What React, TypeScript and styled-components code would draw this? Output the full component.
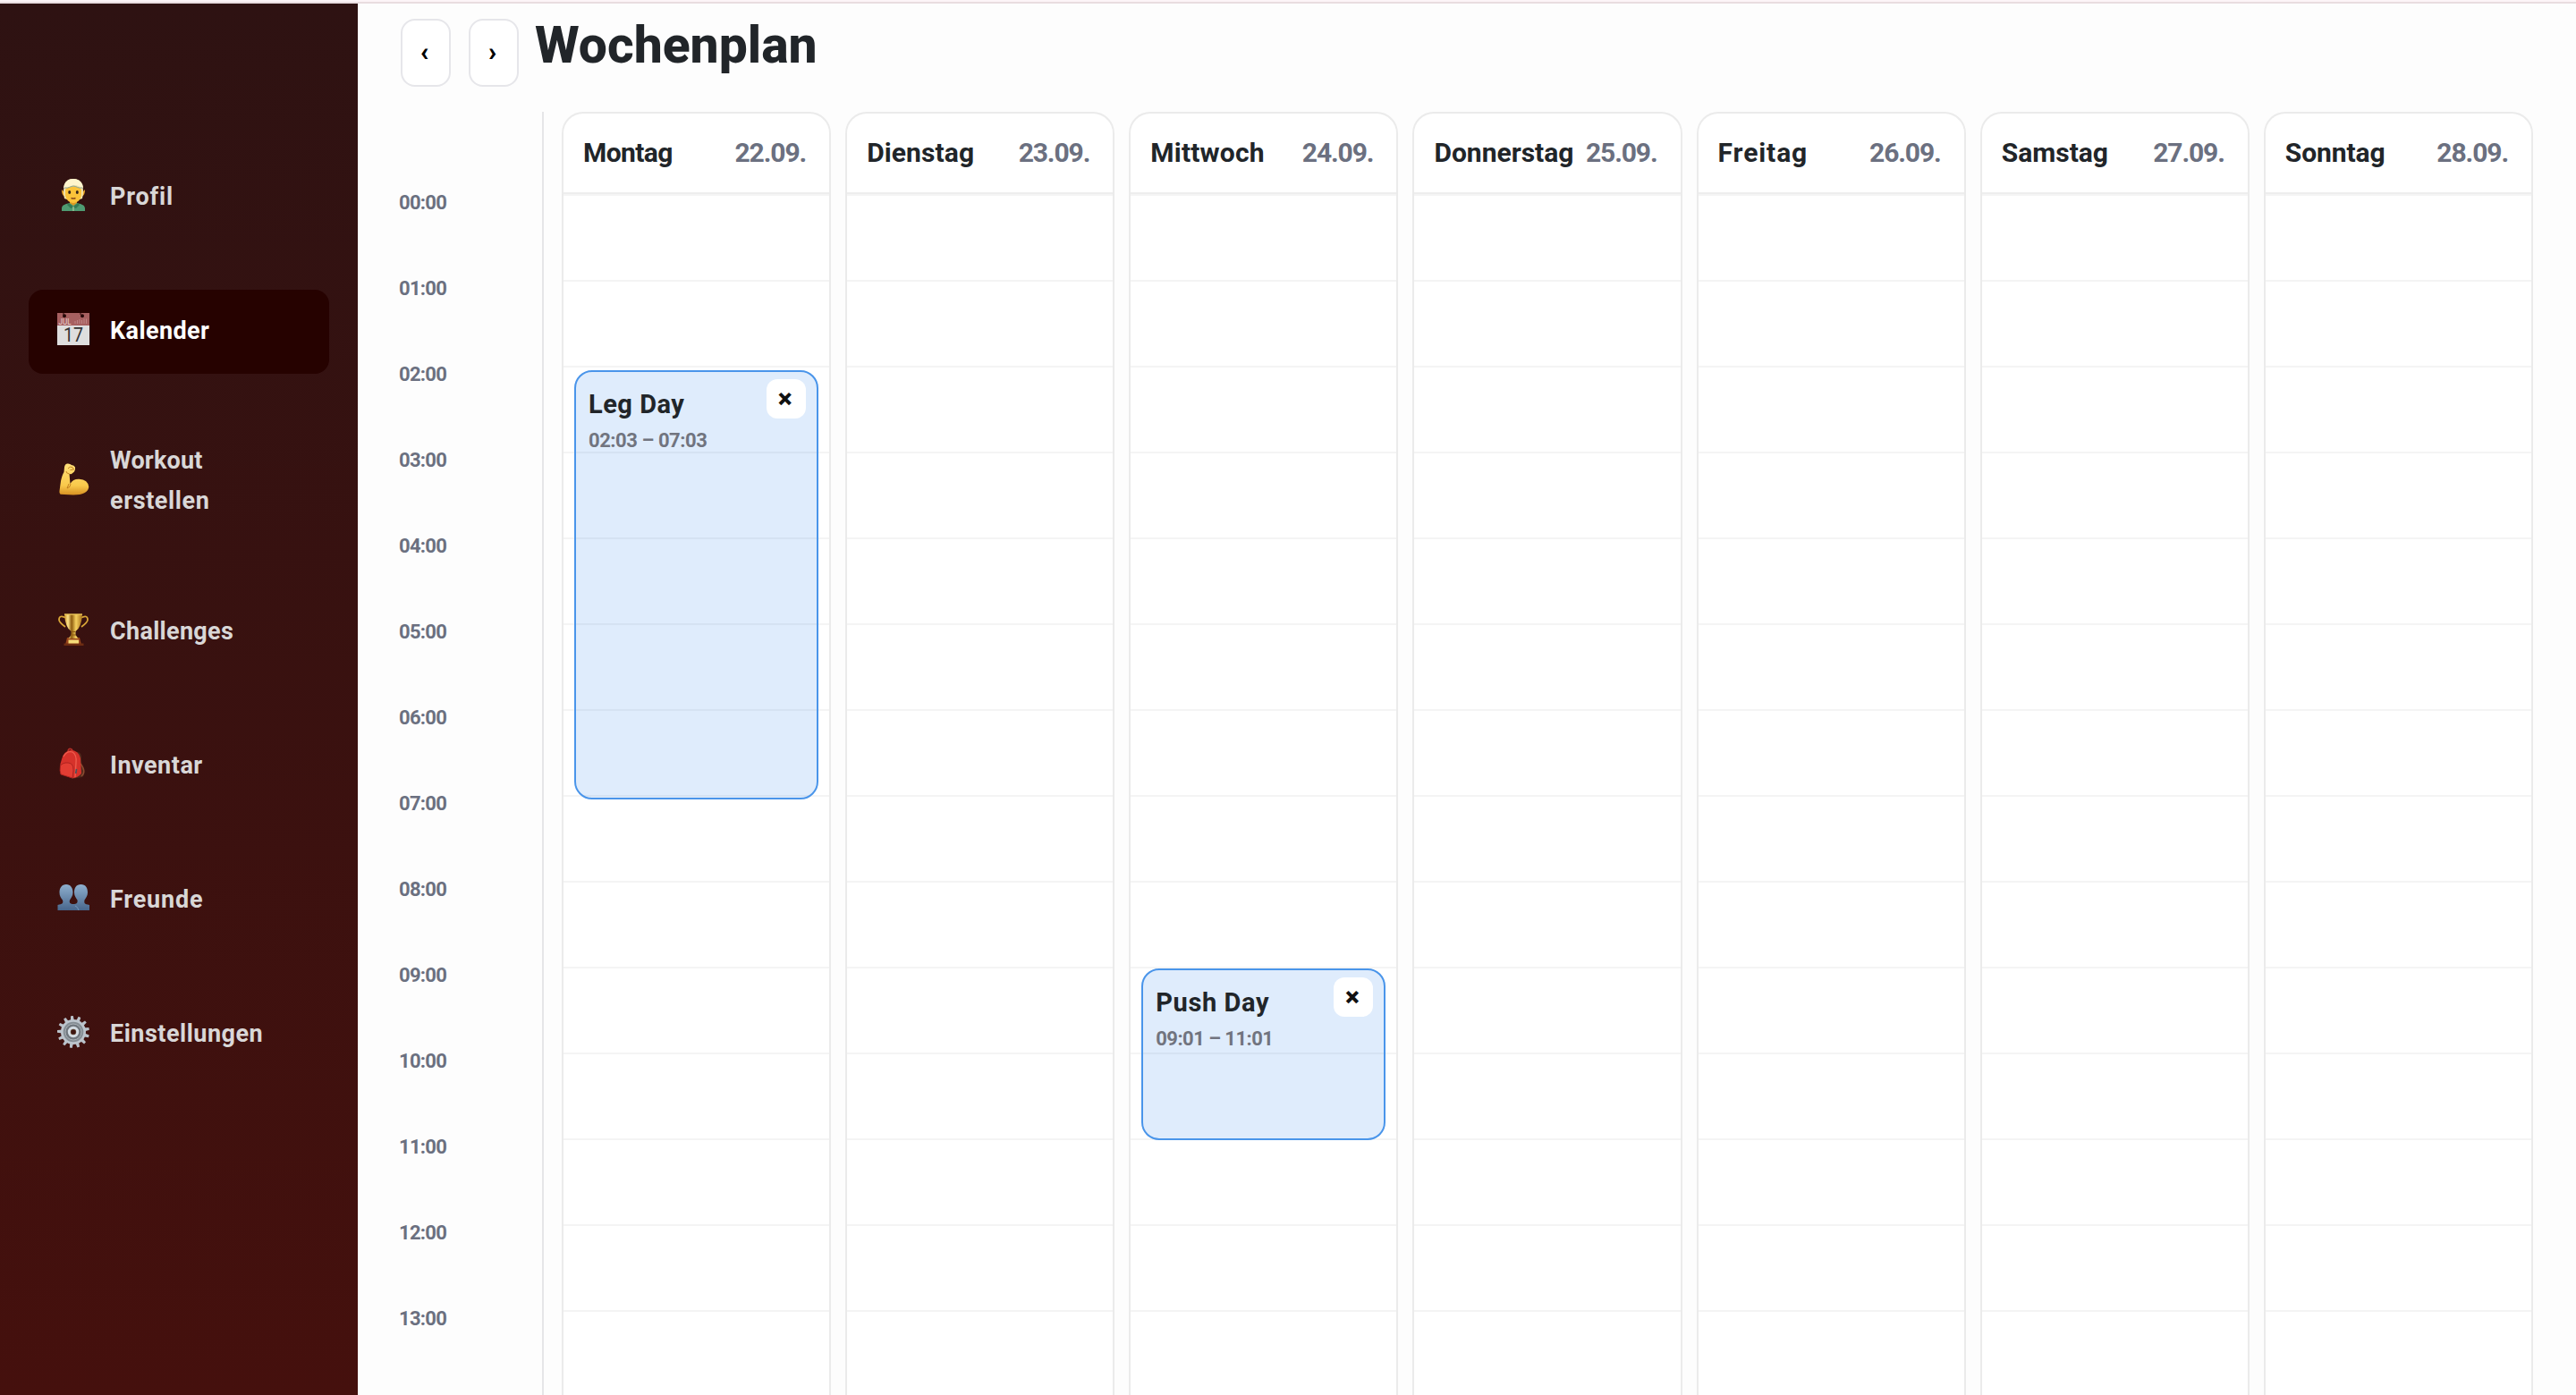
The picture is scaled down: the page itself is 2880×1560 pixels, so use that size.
import React from "react";
import styled, { createGlobalStyle } from "styled-components";

const GlobalStyle = createGlobalStyle`
  *, *::before, *::after { box-sizing: border-box; }
  body { margin: 0; background: #fdfdfd; overflow: hidden; font-family: Roboto, "Liberation Sans", sans-serif; }
  button { font-family: inherit; padding: 0; cursor: pointer; }
`;

const Page = styled.div`
  display: flex;
  flex-direction: column;
  width: 2880px;
  height: 1560px;
  overflow: hidden;
`;

const TopStrip = styled.div`
  flex: none;
  height: 4px;
  background: #fdf4f7;
  border-bottom: 2px solid #e9dde0;
`;

const Body = styled.div`
  display: flex;
  flex: 1;
  min-height: 0;
`;

const Sidebar = styled.nav`
  flex: none;
  display: flex;
  flex-direction: column;
  gap: 56px;
  width: 400px;
  padding: 170px 32px 0;
  background: linear-gradient(180deg, #2e1212 0%, #45100d 100%);
`;

const NavItem = styled.a<{ $active?: boolean }>`
  display: flex;
  align-items: center;
  gap: 23px;
  min-height: 94px;
  padding: 20px 32px;
  border-radius: 16px;
  background: ${(p) => (p.$active ? "#260200" : "transparent")};
  color: ${(p) => (p.$active ? "#ffffff" : "#d9d7d7")};
`;

const NavIcon = styled.svg`
  flex: none;
  width: 36px;
  height: 36px;
  margin-bottom: 6px;
`;

const NavLabel = styled.span`
  display: flex;
  flex-direction: column;
  margin: -1px 0 1px;
  font-size: 27px;
  font-weight: 700;
  line-height: 45px;
`;

const Line = styled.span<{ $spacing: number }>`
  letter-spacing: ${(p) => p.$spacing}px;
  white-space: nowrap;
`;

const Main = styled.main`
  flex: 1;
  display: flex;
  flex-direction: column;
  gap: 28px;
  padding: 17px 48px 0 46px;
  min-width: 0;
  background: #fdfdfd;
`;

const Toolbar = styled.header`
  flex: none;
  display: flex;
  align-items: flex-start;
  height: 76px;
  gap: 20px;
  padding-left: 2px;
`;

const ArrowButton = styled.button`
  width: 56px;
  height: 76px;
  padding: 0 3px 4px 0;
  border: 2px solid #e6e6ea;
  border-radius: 16px;
  background: #fff;
  color: #000;
  font-size: 30px;
  font-weight: 900;
`;

const Title = styled.h1`
  margin: 0 0 0 -2px;
  color: #212529;
  font-size: 57px;
  font-weight: 800;
  line-height: 59px;
`;

const Planner = styled.section`
  flex: 1;
  display: flex;
  gap: 20px;
  min-height: 0;
`;

const TimeColumn = styled.div`
  flex: none;
  width: 162px;
  padding-top: 92px;
  border-right: 2px solid #e6e6e8;
`;

const HourLabel = styled.div`
  height: 96px;
  color: #6b7080;
  font-size: 22px;
  font-weight: 700;
  line-height: 19px;
  letter-spacing: -0.7px;
`;

const Days = styled.div`
  flex: 1;
  display: grid;
  grid-template-columns: repeat(7, 1fr);
  gap: 16px;
`;

const DayColumn = styled.article`
  border: 2px solid #ebebeb;
  border-bottom: 0;
  border-radius: 24px 24px 0 0;
  background: #fff;
  overflow: hidden;
`;

const DayHeader = styled.header`
  display: flex;
  justify-content: space-between;
  align-items: center;
  height: 90px;
  padding: 0 26px 1px 22px;
  border-bottom: 2px solid #eeeeee;
  font-size: 30px;
`;

const DayName = styled.strong<{ $spacing: number }>`
  color: #212529;
  font-weight: 700;
  letter-spacing: ${(p) => p.$spacing}px;
`;

const DayDate = styled.span`
  color: #6b7080;
  font-weight: 700;
  letter-spacing: -1.1px;
`;

const DayGrid = styled.div`
  position: relative;
`;

const HourSlot = styled.div`
  height: 96px;
  border-top: 2px solid #f4f4f4;
`;

const EventCard = styled.div<{ $start: number; $hours: number }>`
  position: absolute;
  top: ${(p) => Math.round(p.$start * 96)}px;
  left: 12px;
  right: 12px;
  height: ${(p) => p.$hours * 96}px;
  display: flex;
  justify-content: space-between;
  padding: 8px 12px 8px 14px;
  border: 2px solid #4a95ea;
  border-radius: 20px;
  background: rgba(32, 125, 232, 0.145);
`;

const EventText = styled.div`
  padding-top: 10px;
`;

const EventName = styled.div<{ $spacing: number }>`
  color: #212529;
  font-size: 29px;
  font-weight: 700;
  line-height: 36px;
  letter-spacing: ${(p) => p.$spacing}px;
`;

const EventTime = styled.div<{ $spacing: number }>`
  margin-top: 8px;
  color: #71747f;
  font-size: 22px;
  font-weight: 700;
  line-height: 30px;
  letter-spacing: ${(p) => p.$spacing}px;
`;

const RemoveButton = styled.button`
  width: 44px;
  height: 44px;
  padding: 0 3px 1px 0;
  border: 0;
  border-radius: 12px;
  background: #fff;
  color: #111;
  font-size: 30px;
  font-weight: 900;
  line-height: 40px;
`;

const ProfileIcon = () => (
  <NavIcon viewBox="0 0 36 36">
    <path d="M5 36v-3c0-4 5-5 9-6h8c4 1 9 2 9 6v3z" fill="#4f9b72" />
    <path d="M13 27l5 4 5-4 2 2-4 4-3-1-3 1-4-4z" fill="#347a55" />
    <path d="M18 31v5" stroke="#a9cf9a" strokeWidth="1.2" />
    <path d="M14 23h8v4l-4 3-4-3z" fill="#dc9b22" />
    <path d="M8 15L5 12c0 4 1 7 4 8zM28 15l3-3c0 4-1 7-4 8z" fill="#f2ae2e" />
    <path d="M8 22C5 8 9 0 18 0s13 8 10 22l-3 1-14 0z" fill="#f1e4b0" />
    <path d="M9 12c4-5 14-5 18 0v6c0 5-5 9-9 9s-9-4-9-9z" fill="#fbc33a" />
    <path d="M7 10C8 3 12 0 18 0s11 4 11 10c-4-1-6-3-9-3-4 0-7 3-13 3z" fill="#fff5cd" />
    <path d="M8 10c5 1 7-2 10-2s6 3 10 2" fill="none" stroke="#89a7a0" strokeWidth="1" />
    <ellipse cx="13.700" cy="15" rx="1.500" ry="2" fill="#35241a" />
    <ellipse cx="22.300" cy="15" rx="1.500" ry="2" fill="#35241a" />
    <path d="M15.500 21.500q2.500 1 5 0" fill="none" stroke="#8b4d1b" strokeWidth="1.400" />
  </NavIcon>
);

const CalendarIcon = () => (
  <NavIcon viewBox="0 0 36 36">
    <path d="M0 0h36v36H0z" fill="#dedede" />
    <path d="M0 0h36v14H0z" fill="#a76060" />
    <circle cx="8" cy="3.200" r="2" fill="#260808" />
    <circle cx="28" cy="3.200" r="2" fill="#260808" />
    <path d="M7 0v2M26 0v2" stroke="#260808" strokeWidth="1" />
    <text x="1.500" y="12.500" fontFamily="Roboto, sans-serif" fontSize="9" fill="#e9d5d5" textLength="14" lengthAdjust="spacingAndGlyphs">JUL</text>
    <path d="M20 9v3M22.500 8v4M25 7v5M27.500 8v4M30 6.500v5.500M32.500 6.500v5.500" stroke="#be8484" strokeWidth="1" />
    <text x="7" y="32" fontFamily="Roboto, sans-serif" fontSize="21.500" fill="#333" textLength="22" lengthAdjust="spacingAndGlyphs">17</text>
  </NavIcon>
);

const WorkoutIcon = () => (
  <NavIcon viewBox="0 0 36 36">
    <defs>
      <linearGradient id="arm" x1="0" y1="0" x2="0" y2="1">
        <stop offset="0" stopColor="#ffe07a" />
        <stop offset="0.700" stopColor="#f9c94b" />
        <stop offset="1" stopColor="#d68f22" />
      </linearGradient>
    </defs>
    <path d="M8 4.500Q8.500 1 11 .5q3-.5 5 1.500 3 .2 4 2.500.5 3-1 5L16 12q-1.500.4-2.500-.2L14.500 23q3-5.500 10-5.200 10 .8 10.800 8.700Q34 35.500 18 35.500L3.500 34.800Q2 34 2.500 31L4 20q1.500-7 3.500-10z" fill="url(#arm)" />
    <path d="M13.500 12q-4-1-3.500-3M12 6q2-3 5-1.500l1.500 2.500-4 .5M13 23l-2 5q4-1 4-5" fill="none" stroke="#bd7a1b" strokeWidth="0.900" />
  </NavIcon>
);

const TrophyIcon = () => (
  <NavIcon viewBox="0 0 36 36">
    <defs>
      <linearGradient id="cup">
        <stop offset="0" stopColor="#c98f27" />
        <stop offset="0.200" stopColor="#ffe58a" />
        <stop offset="0.400" stopColor="#8d5b0f" />
        <stop offset="0.650" stopColor="#f5d05f" />
        <stop offset="1" stopColor="#a8711a" />
      </linearGradient>
    </defs>
    <path d="M10 5Q2 1 2 7q0 3 7 8M26 5q8-4 8 2 0 3-7 8" fill="none" stroke="#d9a636" strokeWidth="1.800" />
    <path d="M11 27h14l2 8H9z" fill="#97451a" />
    <path d="M7.500 33.500h22V36h-22z" fill="#6d2c12" />
    <path d="M12.500 29.500h11.500v4H12.500z" fill="#f6dc79" />
    <path d="M8 1h20q-1 15-7.500 19v4l3 4h-11l3-4v-4Q9 16 8 1z" fill="url(#cup)" />
    <path d="M8 1h20" stroke="#f1cd5c" strokeWidth="1.300" />
    <path d="M16 20.500h4M15 24h6" stroke="#8d5b0f" strokeWidth="1" />
  </NavIcon>
);

const BackpackIcon = () => (
  <NavIcon viewBox="0 0 36 36">
    <path d="M22 5q6 0 5 9l1 8q5 7 0 11l-12 2z" fill="#51291d" />
    <path d="M26 18q7 9 1 14" fill="none" stroke="#8c4c30" strokeWidth="1.500" />
    <path d="M12 4q1-4 4-2l2 3" fill="none" stroke="#b32d26" strokeWidth="1.800" />
    <path d="M5 13Q7 4 15 3q9 0 11 9l1 17q-5 6-11 5L4.500 30q-2-2-1-12z" fill="#d6322b" />
    <path d="M7 10q4-7 10-5 5 3 4 12l-1 16" fill="none" stroke="#ef5e4e" strokeWidth="1.300" />
    <path d="M3.500 20q5-5 12-2 3 2 2.500 8l-1 8L4 30q-1.500-4-.5-10z" fill="#e33d33" stroke="#a9221f" strokeWidth="0.900" />
    <path d="M21.500 24l-.8 5" stroke="#49525c" strokeWidth="1.600" />
  </NavIcon>
);

const FriendsIcon = () => (
  <NavIcon viewBox="0 0 36 36">
    <defs>
      <linearGradient id="people" x1="0" y1="0" x2="0" y2="1">
        <stop offset="0" stopColor="#8fb0cf" />
        <stop offset="1" stopColor="#48668c" />
      </linearGradient>
    </defs>
    <path d="M10 3c5 0 7.500 4 7.500 9 0 4-2 6-3.500 8.500-.8 3 .5 4.500 4 4.500s5-1 4.500-4.500C21 18 19 16 19 12c0-5 2-9 7.500-9S34 7 34 12c0 4-2 6-3.500 8.500C30 24 30 25 36 26v6H.5v-6C6 25 7 24 6 20.500 4 18 2.500 16 2.500 12 2.500 7 5 3 10 3z" fill="url(#people)" />
    <path d="M20 27q3 1 4 5" fill="none" stroke="#7c9abc" strokeWidth="0.900" />
  </NavIcon>
);

const teeth = Array.from({ length: 13 }, (_, i) => (i * 360) / 13);

const SettingsIcon = () => (
  <NavIcon viewBox="0 0 36 36">
    {teeth.map((angle) => (
      <path key={angle} d="M16 6l.6-6h2.800l.6 6z" fill="#b9c1c9" transform={`rotate(${angle - 5} 18 18)`} />
    ))}
    <circle cx="18" cy="18" r="14" fill="#bcc4cc" />
    <circle cx="18" cy="18" r="11.300" fill="#858d94" />
    <circle cx="18" cy="18" r="9" fill="#70777e" stroke="#a9b0b6" strokeWidth="1" />
    <circle cx="18" cy="18" r="4.700" fill="#66523f" stroke="#d3dbe2" strokeWidth="3" />
    <circle cx="18" cy="18" r="2.600" fill="#3e1611" />
  </NavIcon>
);

type NavEntry = { icon: React.FC; lines: [string, number][]; active?: boolean };

const navEntries: NavEntry[] = [
  { icon: ProfileIcon, lines: [["Profil", 0.8]] },
  { icon: CalendarIcon, lines: [["Kalender", 0.4]], active: true },
  { icon: WorkoutIcon, lines: [["Workout", 0.2], ["erstellen", 0.6]] },
  { icon: TrophyIcon, lines: [["Challenges", 0.3]] },
  { icon: BackpackIcon, lines: [["Inventar", 0.5]] },
  { icon: FriendsIcon, lines: [["Freunde", 0.8]] },
  { icon: SettingsIcon, lines: [["Einstellungen", 0.5]] },
];

type PlanEvent = { name: string; time: string; start: number; hours: number; nameSpacing: number; timeSpacing: number };
type Day = { name: string; date: string; spacing: number; event?: PlanEvent };

const days: Day[] = [
  {
    name: "Montag", date: "22.09.", spacing: -0.6,
    event: { name: "Leg Day", time: "02:03 – 07:03", start: 2 + 3 / 60, hours: 5, nameSpacing: 0.5, timeSpacing: -0.45 },
  },
  { name: "Dienstag", date: "23.09.", spacing: 0.1 },
  {
    name: "Mittwoch", date: "24.09.", spacing: 0.2,
    event: { name: "Push Day", time: "09:01 – 11:01", start: 9 + 1 / 60, hours: 2, nameSpacing: 0.6, timeSpacing: -0.55 },
  },
  { name: "Donnerstag", date: "25.09.", spacing: 0 },
  { name: "Freitag", date: "26.09.", spacing: 0.9 },
  { name: "Samstag", date: "27.09.", spacing: 0 },
  { name: "Sonntag", date: "28.09.", spacing: -0.1 },
];

const hours = Array.from({ length: 14 }, (_, i) => `${String(i).padStart(2, "0")}:00`);

export default function App() {
  return (
    <Page>
      <GlobalStyle />
      <TopStrip />
      <Body>
        <Sidebar>
          {navEntries.map(({ icon: Icon, lines, active }) => (
            <NavItem key={lines[0][0]} $active={active}>
              <Icon />
              <NavLabel>
                {lines.map(([text, spacing]) => (
                  <Line key={text} $spacing={spacing}>{text}</Line>
                ))}
              </NavLabel>
            </NavItem>
          ))}
        </Sidebar>
        <Main>
          <Toolbar>
            <ArrowButton aria-label="Vorherige Woche">‹</ArrowButton>
            <ArrowButton aria-label="Nächste Woche">›</ArrowButton>
            <Title>Wochenplan</Title>
          </Toolbar>
          <Planner>
            <TimeColumn>
              {hours.map((hour) => <HourLabel key={hour}>{hour}</HourLabel>)}
            </TimeColumn>
            <Days>
              {days.map(({ name, date, spacing, event }) => (
                <DayColumn key={name}>
                  <DayHeader>
                    <DayName $spacing={spacing}>{name}</DayName>
                    <DayDate>{date}</DayDate>
                  </DayHeader>
                  <DayGrid>
                    {hours.map((hour) => <HourSlot key={hour} />)}
                    {event && (
                      <EventCard $start={event.start} $hours={event.hours}>
                        <EventText>
                          <EventName $spacing={event.nameSpacing}>{event.name}</EventName>
                          <EventTime $spacing={event.timeSpacing}>{event.time}</EventTime>
                        </EventText>
                        <RemoveButton aria-label="Entfernen">×</RemoveButton>
                      </EventCard>
                    )}
                  </DayGrid>
                </DayColumn>
              ))}
            </Days>
          </Planner>
        </Main>
      </Body>
    </Page>
  );
}
